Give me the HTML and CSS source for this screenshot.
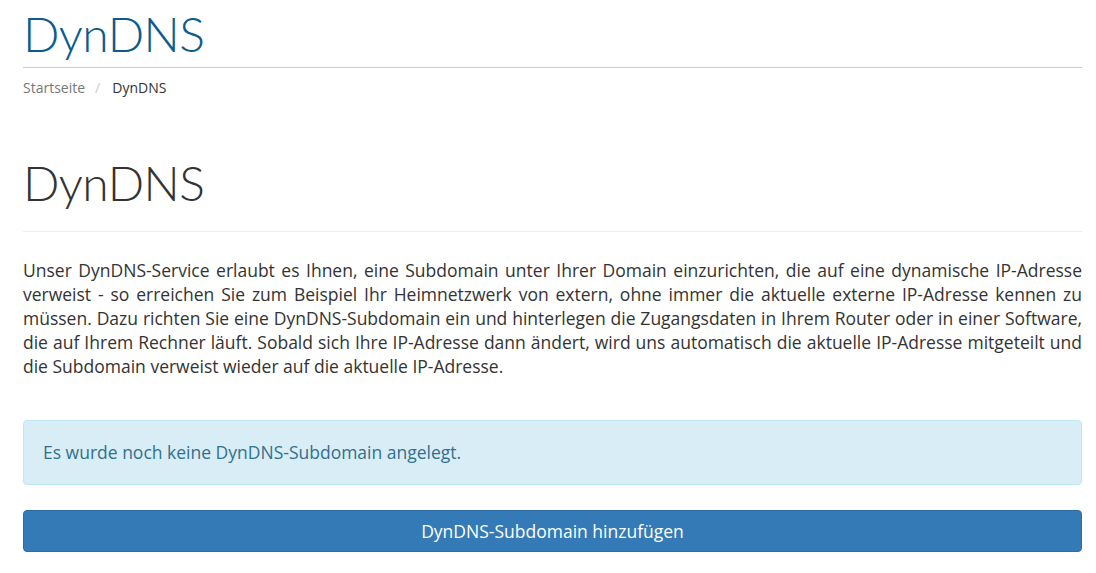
FILE: index.html
```html
<!DOCTYPE html>
<html lang="de">
<head>
<meta charset="utf-8">
<title>DynDNS</title>
<link rel="stylesheet" href="styles.css">
</head>
<body>
<div class="container">
  <header class="site-header">
    <h1 class="site-title">DynDNS</h1>
  </header>
  <ol class="breadcrumb">
    <li class="crumb"><a href="#">Startseite</a></li>
    <li class="crumb active">DynDNS</li>
  </ol>
  <div class="page-header">
    <h1 class="page-title">DynDNS</h1>
  </div>
  <p class="intro">Unser DynDNS-Service erlaubt es Ihnen, eine Subdomain unter Ihrer Domain einzurichten, die auf eine dynamische IP-Adresse verweist - so erreichen Sie zum Beispiel Ihr Heimnetzwerk von extern, ohne immer die aktuelle externe IP-Adresse kennen zu müssen. Dazu richten Sie eine DynDNS-Subdomain ein und hinterlegen die Zugangsdaten in Ihrem Router oder in einer Software, die auf Ihrem Rechner läuft. Sobald sich Ihre IP-Adresse dann ändert, wird uns automatisch die aktuelle IP-Adresse mitgeteilt und die Subdomain verweist wieder auf die aktuelle IP-Adresse.</p>
  <div class="alert">Es wurde noch keine DynDNS-Subdomain angelegt.</div>
  <a class="btn" href="#">DynDNS-Subdomain hinzufügen</a>
</div>
</body>
</html>
```

FILE: styles.css
```css
* { box-sizing: border-box; }
html, body { margin: 0; padding: 0; background: #fff; }
body {
  font-family: "Open Sans", "Liberation Sans", sans-serif;
  font-size: 17.5px;
  line-height: 24px;
  color: #333;
}
.container {
  width: 1059px;
  margin-left: 23px;
  display: flex;
  flex-direction: column;
}
.site-header {
  border-bottom: 1px solid #ccc;
  height: 68px;
}
.site-title {
  margin: 0;
  padding-top: 6px;
  font-family: "Lato", "Inter", sans-serif;
  font-weight: 300;
  font-size: 48px;
  line-height: 56px;
  letter-spacing: -0.6px;
  color: #0b5b8d;
}
.breadcrumb {
  list-style: none;
  margin: 0;
  padding: 10px 0 0;
  display: flex;
  font-size: 14px;
  line-height: 20px;
}
.crumb a { color: #777; text-decoration: none; }
.crumb + .crumb::before {
  content: "/";
  color: #ccc;
  padding: 0 12px 0 10px;
}
.crumb.active { color: #333; }
.page-header {
  margin-top: 42px;
  border-bottom: 1px solid #eee;
  height: 92px;
}
.page-title {
  margin: 0;
  padding-top: 15px;
  font-family: "Lato", "Inter", sans-serif;
  font-weight: 300;
  font-size: 48px;
  line-height: 56px;
  letter-spacing: -0.6px;
  color: #333;
}
.intro {
  margin: 26px 0 0;
  text-align: justify;
}
.alert {
  margin-top: 42px;
  background: #d9edf7;
  border: 1px solid #bce8f1;
  border-radius: 4px;
  color: #31708f;
  padding: 19px 19px;
  height: 65px;
}
.btn {
  margin-top: 25px;
  display: block;
  height: 42px;
  background: #337ab7;
  border: 1px solid #2e6da4;
  border-radius: 4px;
  color: #fff;
  text-decoration: none;
  text-align: center;
  font-size: 17.5px;
  line-height: 24px;
  padding: 8px 16px;
}
```
